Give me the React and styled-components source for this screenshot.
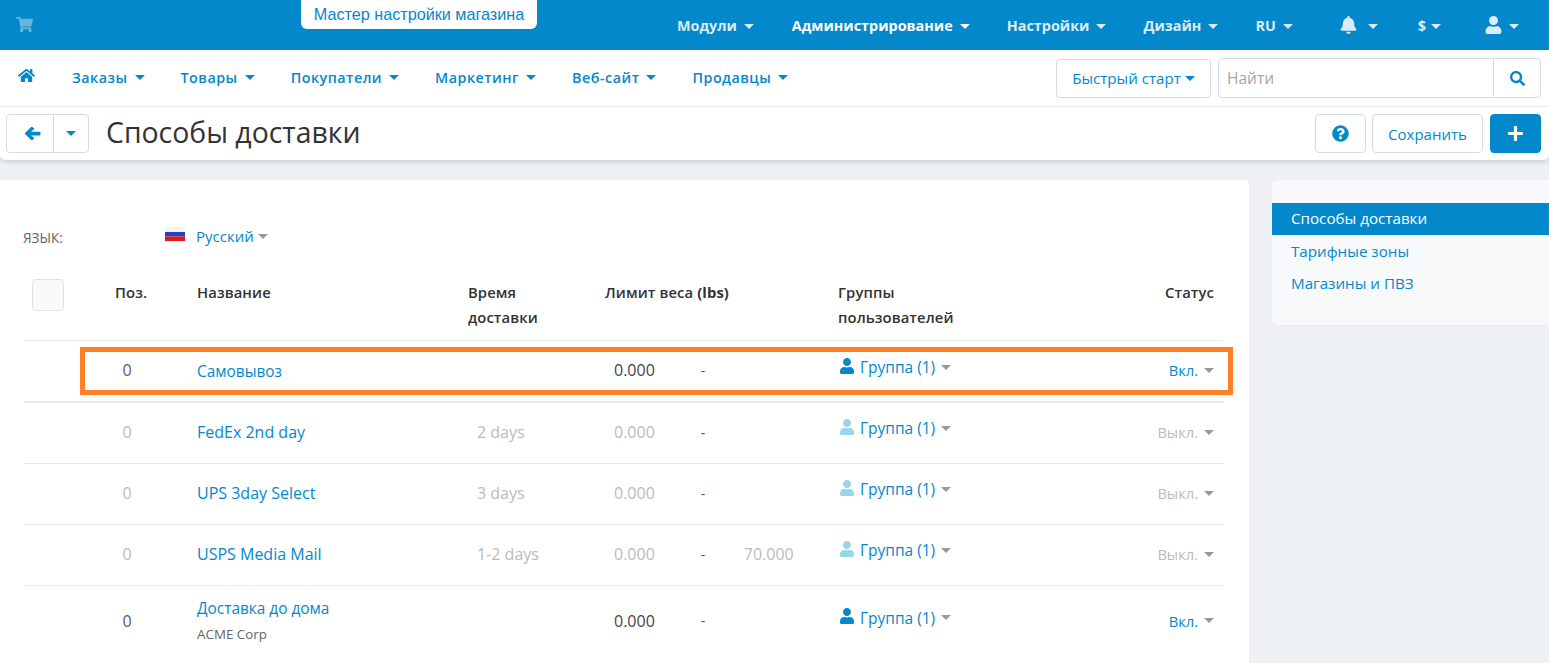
import React from "react";
import styled, { createGlobalStyle } from "styled-components";
import {
  FaShoppingCart,
  FaHome,
  FaBell,
  FaUser,
  FaQuestionCircle,
  FaSearch,
  FaPlus,
} from "react-icons/fa";

const blue = "#0388cc";
const columns = "91px 82px 271px 137px 233px 1fr auto";

const GlobalStyle = createGlobalStyle`
  html, body {
    margin: 0;
    height: 663px;
    overflow: hidden;
    background: #edf1f4;
    font-family: "Open Sans", "Noto Sans", sans-serif;
    font-size: 14px;
    color: #333;
  }
  * { box-sizing: border-box; }
`;

const TopBar = styled.header`
  position: relative;
  display: flex;
  align-items: center;
  height: 50px;
  padding: 0 30px 0 16px;
  background: ${blue};
`;
const CartIcon = styled(FaShoppingCart)`
  width: 17px;
  height: 17px;
  color: #69b3dd;
  margin-top: -1px;
`;
const WizardTab = styled.a`
  position: absolute;
  left: 301px;
  top: 0;
  width: 236px;
  height: 29px;
  padding-top: 4px;
  text-align: center;
  background: #fff;
  border-radius: 0 0 6px 6px;
  color: ${blue};
  font-family: "Liberation Sans", Arial, sans-serif;
  font-size: 16.2px;
  line-height: 20px;
`;
const TopMenu = styled.nav`
  display: flex;
  align-items: center;
  margin: 2px 0 0 auto;
`;
const TopItem = styled.a`
  display: flex;
  align-items: center;
  margin-left: ${(p) => p.$gap}px;
  color: ${(p) => (p.$bright ? "#fff" : "#dcecf6")};
  font-weight: 700;
  font-size: 14.4px;
  line-height: 20px;
  svg { width: 17px; height: 18px; margin-top: -2px; }
`;
const Caret = styled.i`
  display: inline-block;
  width: 0;
  height: 0;
  margin-left: ${(p) => p.$left ?? 7}px;
  border-left: 5px solid transparent;
  border-right: 5px solid transparent;
  border-top: 5px solid ${(p) => p.$color || "currentColor"};
`;

const MainNav = styled.nav`
  display: flex;
  align-items: center;
  height: 57px;
  padding: 0 8px 0 18px;
  background: #fff;
  border-bottom: 1px solid #eef1f3;
`;
const HomeIcon = styled(FaHome)`
  width: 17px;
  height: 17px;
  color: ${blue};
  margin: -5px 37px 0 0;
`;
const NavItem = styled.a`
  display: flex;
  align-items: center;
  margin: -1px 36px 0 0;
  color: ${blue};
  font-weight: 600;
  font-size: 14.3px;
  letter-spacing: 0.5px;
`;
const QuickStart = styled.button`
  display: flex;
  align-items: center;
  justify-content: center;
  width: 155px;
  height: 39px;
  margin-left: auto;
  padding: 0;
  background: #fff;
  border: 1px solid #d3dde5;
  border-radius: 4px;
  color: ${blue};
  font: inherit;
  font-size: 15.1px;
`;
const SearchBox = styled.div`
  display: flex;
  width: 323px;
  height: 40px;
  margin-left: 7px;
  border: 1px solid #d3dde5;
  border-radius: 4px;
`;
const SearchInput = styled.div`
  flex: 1;
  padding-left: 8px;
  color: #a5a5a5;
  font-size: 15.5px;
  line-height: 38px;
`;
const SearchButton = styled.div`
  display: flex;
  align-items: center;
  justify-content: center;
  width: 47px;
  border-left: 1px solid #d3dde5;
  color: ${blue};
  svg { width: 15px; height: 15px; }
`;

const ToolBar = styled.div`
  display: flex;
  align-items: center;
  height: 53px;
  padding: 0 8px 0 6px;
  background: #fff;
  border-radius: 0 0 6px 6px;
  box-shadow: 0 2px 5px rgba(0, 0, 0, 0.14);
`;
const BackGroup = styled.div`
  display: flex;
  width: 83px;
  height: 39px;
  border: 1px solid #d3dde5;
  border-radius: 4px;
  color: ${blue};
`;
const BackButton = styled.div`
  display: flex;
  align-items: center;
  justify-content: center;
  width: 47px;
  padding-left: 4px;
  border-right: 1px solid #d3dde5;
  svg { width: 17px; height: 15px; fill: currentColor; }
`;
const BackCaret = styled.div`
  display: flex;
  flex: 1;
  align-items: center;
  justify-content: center;
`;
const Title = styled.h1`
  margin: -4px 0 0 17px;
  font-size: 28.4px;
  font-weight: 400;
  color: #333;
`;
const ToolSpacer = styled.div`
  flex: 1;
`;
const ToolButton = styled.button`
  display: flex;
  align-items: center;
  justify-content: center;
  width: ${(p) => p.$width}px;
  height: 39px;
  margin-left: ${(p) => p.$left ?? 6}px;
  padding: 0;
  background: ${(p) => (p.$primary ? blue : "#fff")};
  border: 1px solid ${(p) => (p.$primary ? blue : "#d3dde5")};
  border-radius: 4px;
  color: ${(p) => (p.$primary ? "#fff" : blue)};
  font: inherit;
  font-size: 15px;
  svg { width: 17px; height: 17px; }
`;

const Content = styled.main`
  display: flex;
  align-items: flex-start;
  margin-top: 20px;
`;
const Card = styled.section`
  width: 1249px;
  height: 483px;
  padding: 43px 25px 0 24px;
  overflow: hidden;
  background: #fff;
  border-radius: 0 5px 0 0;
`;
const LangRow = styled.div`
  display: flex;
  align-items: center;
  height: 26px;
`;
const LangLabel = styled.span`
  width: 141px;
  margin: 2px 0 0 -1px;
  color: #666;
  font-size: 13.6px;
`;
const Flag = styled.svg`
  width: 20px;
  height: 15px;
  margin: -4px 11px 0 1px;
`;
const LangLink = styled.a`
  display: flex;
  align-items: center;
  color: ${blue};
  font-size: 15px;
`;

const HeadRow = styled.div`
  display: grid;
  grid-template-columns: ${columns};
  height: 75px;
  margin-top: 17px;
  padding: 14px 10px 0 0;
  border-bottom: 1px solid #e9ecee;
  font-weight: 600;
  font-size: 14.8px;
  letter-spacing: 0.1px;
  line-height: 25px;
  color: #333;
`;
const Unit = styled.b`
  font-weight: 700;
`;
const CheckBox = styled.div`
  width: 32px;
  height: 32px;
  margin: -1px 0 0 8px;
  background: #fafafa;
  border: 1px solid #dfe3e6;
  border-radius: 4px;
`;
const Row = styled.div`
  position: relative;
  display: grid;
  grid-template-columns: ${columns};
  align-items: center;
  height: ${(p) => p.$height}px;
  padding: 0 10px 2px 0;
  border-bottom: ${(p) => p.$border ?? 1}px solid #e9ecee;
`;
const Highlight = styled.div`
  position: absolute;
  left: 56px;
  top: 6px;
  right: -9px;
  height: 48px;
  border: 5px solid #ff7f27;
  pointer-events: none;
`;
const PosCell = styled.div`
  width: 24px;
  text-align: center;
  font-size: 16px;
  color: ${(p) => (p.$off ? "#bbb" : "#4f5f6b")};
`;
const NameCell = styled.div`
  margin-top: ${(p) => p.$drop}px;
`;
const NameLink = styled.a`
  color: ${blue};
  font-size: ${(p) => (p.$small ? 15.4 : 16)}px;
  line-height: 20px;
`;
const Company = styled.div`
  margin-top: 7px;
  font-size: 13.4px;
  line-height: 16px;
  color: #666;
`;
const TimeCell = styled.div`
  padding-left: 9px;
  font-size: 16px;
  color: #bbb;
`;
const LimitCell = styled.div`
  display: flex;
  align-items: center;
  padding-left: 9px;
  font-size: 16px;
  color: ${(p) => (p.$off ? "#bbb" : "#444")};
`;
const Dash = styled.span`
  margin-left: 46px;
  width: 43px;
  font-size: 14px;
  color: #555;
`;
const GroupCell = styled.a`
  display: flex;
  align-items: center;
  margin-top: ${(p) => (p.$off ? -8 : -6)}px;
  color: ${blue};
  font-size: 15.5px;
`;
const GroupIcon = styled(FaUser)`
  width: 16px;
  height: 16px;
  margin: -3px 5px 0 1px;
  color: ${(p) => (p.$off ? "#97d6ea" : blue)};
`;
const StatusCell = styled.a`
  display: flex;
  align-items: center;
  color: ${(p) => (p.$off ? "#bbb" : blue)};
  font-size: 14.7px;
`;

const SideCard = styled.aside`
  width: 277px;
  height: 145px;
  margin-left: 23px;
  padding-top: 23px;
  background: #f8f9fa;
  border-radius: 5px 0 0 5px;
  box-shadow: 0 0 2px rgba(0, 0, 0, 0.06);
`;
const SideItem = styled.a`
  display: block;
  height: 32px;
  padding-left: 19px;
  background: ${(p) => (p.$active ? blue : "transparent")};
  color: ${(p) => (p.$active ? "#fff" : blue)};
  font-size: 15.2px;
  line-height: ${(p) => (p.$active ? 31 : 33)}px;
`;

const topItems = [
  { label: "Модули", gap: 0 },
  { label: "Администрирование", gap: 38, bright: true },
  { label: "Настройки", gap: 37 },
  { label: "Дизайн", gap: 37 },
  { label: "RU", gap: 37 },
];
const navItems = ["Заказы", "Товары", "Покупатели", "Маркетинг", "Веб-сайт", "Продавцы"];

const rows = [
  { name: "FedEx 2nd day", time: "2 days" },
  { name: "UPS 3day Select", time: "3 days" },
  { name: "USPS Media Mail", time: "1-2 days", max: "70.000" },
];

function RowCells({ off, name, company, time, max }) {
  return (
    <>
      <div />
      <PosCell $off={off}>0</PosCell>
      <NameCell $drop={off || company ? 0 : 3}>
        <NameLink $small={!off}>{name}</NameLink>
        {company && <Company>{company}</Company>}
      </NameCell>
      <TimeCell>{time}</TimeCell>
      <LimitCell $off={off}>
        0.000
        <Dash>-</Dash>
        {max}
      </LimitCell>
      <GroupCell $off={off}>
        <GroupIcon $off={off} />
        Группа (1)
        <Caret $left={6} $color="#999" />
      </GroupCell>
      <StatusCell $off={off}>
        {off ? "Выкл." : "Вкл."}
        <Caret $left={6} $color="#999" />
      </StatusCell>
    </>
  );
}

export default function App() {
  return (
    <>
      <GlobalStyle />
      <TopBar>
        <CartIcon />
        <WizardTab>Мастер настройки магазина</WizardTab>
        <TopMenu>
          {topItems.map((item) => (
            <TopItem key={item.label} $gap={item.gap} $bright={item.bright}>
              {item.label}
              <Caret />
            </TopItem>
          ))}
          <TopItem $gap={47}>
            <FaBell />
            <Caret $left={11} />
          </TopItem>
          <TopItem $gap={40}>
            $
            <Caret $left={5} />
          </TopItem>
          <TopItem $gap={44}>
            <FaUser />
            <Caret />
          </TopItem>
        </TopMenu>
      </TopBar>

      <MainNav>
        <HomeIcon />
        {navItems.map((label) => (
          <NavItem key={label}>
            {label}
            <Caret />
          </NavItem>
        ))}
        <QuickStart>
          Быстрый старт
          <Caret $left={4} />
        </QuickStart>
        <SearchBox>
          <SearchInput>Найти</SearchInput>
          <SearchButton>
            <FaSearch />
          </SearchButton>
        </SearchBox>
      </MainNav>

      <ToolBar>
        <BackGroup>
          <BackButton>
            <svg viewBox="0 0 18 16">
              <path d="M0.5 8 L7.5 1 Q8.2 0.4 9 1 L10.3 2.3 Q10.9 3 10.3 3.7 L7.5 6 H16.5 Q17.5 6 17.5 7 V9 Q17.5 10 16.5 10 H7.5 L10.3 12.3 Q10.9 13 10.3 13.7 L9 15 Q8.2 15.6 7.5 15 Z" />
            </svg>
          </BackButton>
          <BackCaret>
            <Caret $left={0} />
          </BackCaret>
        </BackGroup>
        <Title>Способы доставки</Title>
        <ToolSpacer />
        <ToolButton $width={51}>
          <FaQuestionCircle />
        </ToolButton>
        <ToolButton $width={111}>Сохранить</ToolButton>
        <ToolButton $width={51} $left={7} $primary>
          <FaPlus />
        </ToolButton>
      </ToolBar>

      <Content>
        <Card>
          <LangRow>
            <LangLabel>ЯЗЫК:</LangLabel>
            <Flag viewBox="0 0 20 15">
              <rect width="20" height="5" fill="#f4f4f4" />
              <rect y="5" width="20" height="4.5" fill="#2a3fc0" />
              <rect y="9.5" width="20" height="4.5" fill="#e4141c" />
            </Flag>
            <LangLink>
              Русский
              <Caret $left={4} $color="#999" />
            </LangLink>
          </LangRow>
          <HeadRow>
            <div>
              <CheckBox />
            </div>
            <div>Поз.</div>
            <div>Название</div>
            <div>
              Время
              <br />
              доставки
            </div>
            <div>
              Лимит веса <Unit>(lbs)</Unit>
            </div>
            <div>
              Группы
              <br />
              пользователей
            </div>
            <div>Статус</div>
          </HeadRow>
          <Row $height={62} $border={2}>
            <RowCells name="Самовывоз" />
            <Highlight />
          </Row>
          {rows.map((row) => (
            <Row key={row.name} $height={61}>
              <RowCells off {...row} />
            </Row>
          ))}
          <Row $height={71} $border={0}>
            <RowCells name="Доставка до дома" company="ACME Corp" />
          </Row>
        </Card>
        <SideCard>
          <SideItem $active>Способы доставки</SideItem>
          <SideItem>Тарифные зоны</SideItem>
          <SideItem>Магазины и ПВЗ</SideItem>
        </SideCard>
      </Content>
    </>
  );
}
